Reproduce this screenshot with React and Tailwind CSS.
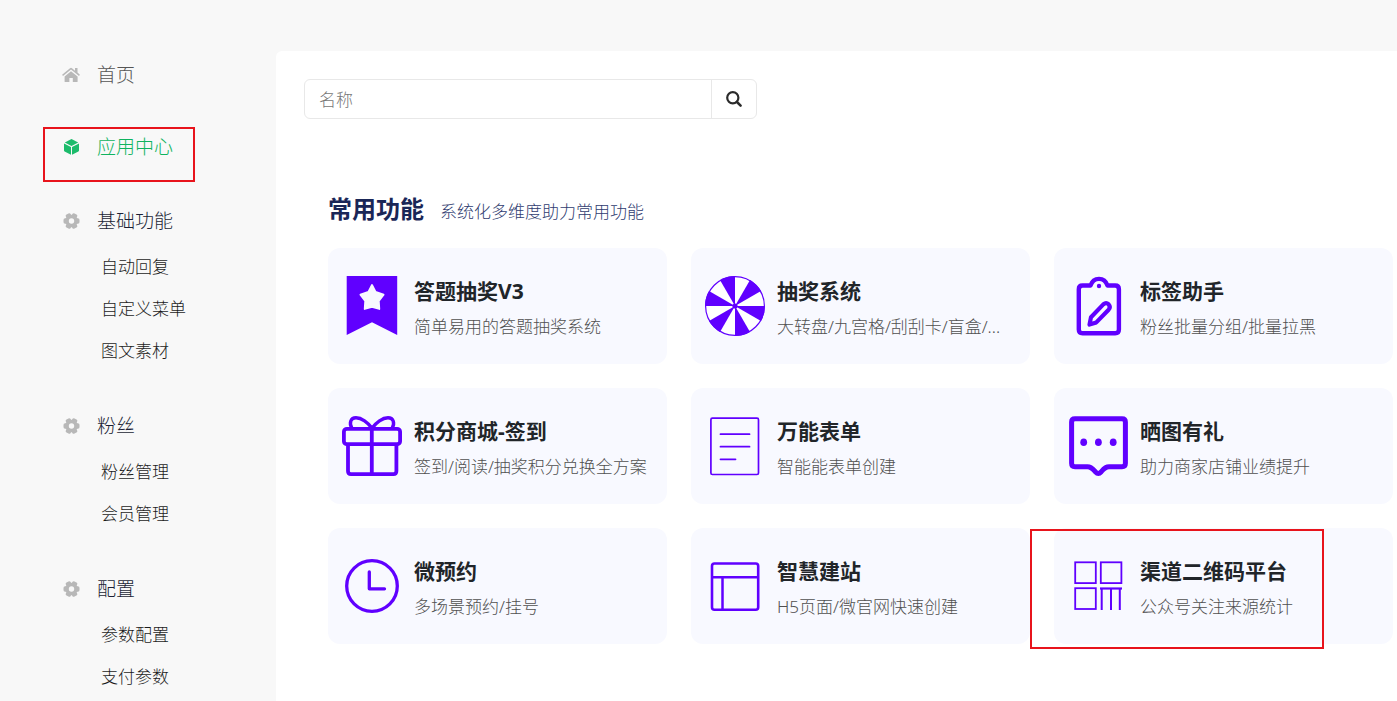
import React from 'react';

const PURPLE = '#6000ff';

function Svg({ children }) {
  return (
    <svg viewBox="0 0 60 60" className="size-[60px] shrink-0" fill="none" stroke={PURPLE} aria-hidden="true">
      {children}
    </svg>
  );
}

function BookmarkIcon() {
  return (
    <Svg>
      <path d="M4.7 0H55.2V59L30 46.3L4.7 59Z" fill={PURPLE} stroke="none" />
      <path
        d="M30 9L33.6 15.9L41.6 18.6L36.8 25L37.3 33L30 31L22.7 33L23.2 25L18.4 18.6L26.4 15.9Z"
        fill="#f8f9ff"
        stroke="#f8f9ff"
        strokeWidth="1.8"
        strokeLinejoin="round"
      />
    </Svg>
  );
}

function WheelIcon() {
  return (
    <Svg>
      <circle cx="30" cy="30" r="29.4" fill="#fff" strokeWidth="1.2" />
      {[0, 60, 120, 180, 240, 300].map((a) => (
        <path key={a} d="M30 30H60A30 30 0 0 1 55.98 45Z" fill={PURPLE} stroke="none" transform={`rotate(${a} 30 30)`} />
      ))}
      <circle cx="30" cy="30" r="2.6" fill={PURPLE} stroke="none" />
    </Svg>
  );
}

function ClipboardIcon() {
  return (
    <Svg>
      <path
        d="M22.5 9.5H14.5Q10.8 9.5 10.8 13.2V53.5Q10.8 57.2 14.5 57.2H47.2Q50.9 57.2 50.9 53.5V13.2Q50.9 9.5 47.2 9.5H39.5C38 5.2 35 2.9 31 2.9S24 5.2 22.5 9.5Z"
        strokeWidth="4.4"
        strokeLinejoin="round"
      />
      <circle cx="31" cy="10" r="2.2" fill={PURPLE} stroke="none" />
      <path d="M21.5 48.6L23 41.2L35.3 28.4Q38.1 25.9 40.6 28.3Q43 31 40.6 33.7L28.3 46.4Z" strokeWidth="4.2" strokeLinejoin="round" />
    </Svg>
  );
}

function GiftIcon() {
  return (
    <Svg>
      <g strokeWidth="3.8" strokeLinejoin="round">
        <rect x="1.9" y="12.8" width="56.2" height="15.4" rx="3" />
        <path d="M6 28.5V55Q6 58.1 9 58.1H51.4Q54.4 58.1 54.4 55V28.5M29.8 13V58" />
      </g>
      <path
        d="M29.8 12C26 6.5 19.5 1.7 14 1.7C8.5 1.7 7 7 9.8 12M30.2 12C34 6.5 40.5 1.7 46 1.7C51.5 1.7 53 7 50.2 12"
        strokeWidth="3.4"
      />
    </Svg>
  );
}

function FormIcon() {
  return (
    <Svg>
      <rect x="5.9" y="2.2" width="47.6" height="56.3" rx="1.5" strokeWidth="1.7" />
      <path d="M15.5 18.2H44.5M15.5 30.7H44.5M15.5 43.3H30.5" strokeWidth="1.8" strokeLinecap="round" />
    </Svg>
  );
}

function ChatIcon() {
  return (
    <Svg>
      <path
        d="M7 2.7H54Q57.4 2.7 57.4 6.1V47.3Q57.4 50.7 54 50.7H41C37 50.7 35.5 53 33 56Q30.3 58.9 27.6 56C25 53 23.5 50.7 19.5 50.7H7Q3.6 50.7 3.6 47.3V6.1Q3.6 2.7 7 2.7Z"
        strokeWidth="5"
      />
      <g fill={PURPLE} stroke="none">
        <ellipse cx="15.7" cy="26.3" rx="3.4" ry="3.8" />
        <ellipse cx="30.4" cy="26.3" rx="3.4" ry="3.8" />
        <ellipse cx="45.2" cy="26.3" rx="3.4" ry="3.8" />
      </g>
    </Svg>
  );
}

function ClockIcon() {
  return (
    <Svg>
      <circle cx="30" cy="30" r="25.3" strokeWidth="3.3" />
      <path d="M27.3 16V32.8H42.5" strokeWidth="3.3" strokeLinecap="round" strokeLinejoin="round" />
    </Svg>
  );
}

function LayoutIcon() {
  return (
    <Svg>
      <rect x="7" y="7.5" width="46.2" height="46.2" rx="2.5" strokeWidth="2.6" />
      <path d="M7 21.3H53M17.5 21.3V53.5" strokeWidth="2.5" />
    </Svg>
  );
}

function QrIcon() {
  return (
    <Svg>
      <g strokeWidth="1.8">
        <rect x="7.2" y="6.3" width="20.6" height="20.8" />
        <rect x="32.8" y="6.3" width="20.6" height="20.8" />
        <rect x="7.2" y="32.2" width="20.6" height="20.8" />
        <path d="M32 32.5H54" strokeWidth="2.2" />
        <path d="M33.7 32.5V54M43 32.5V54M51.8 32.5V54" strokeWidth="2" />
      </g>
    </Svg>
  );
}

function HomeIcon() {
  return (
    <svg viewBox="0 0 18 16" className="h-4 w-[18px]" fill="#b8b8b8" aria-hidden="true">
      <path d="M9 4.2L15.6 9.6V14.4Q15.6 15 15 15H10.8V10.9H7.4V15H3.2Q2.6 15 2.6 14.4V9.6Z" />
      <path d="M13 1H15.5V5.6L17.9 7.7L17 8.9L9 2.6L1 8.9L.1 7.7L8 1.2Q9 .5 10 1.2L13 3.7Z" />
    </svg>
  );
}

function CubeIcon() {
  return (
    <svg viewBox="0 0 18 16" className="h-4 w-[18px]" fill="#1cbb6b" aria-hidden="true">
      <path d="M9.5 0L16.2 3.5L9.5 6.9L2.8 3.5Z" />
      <path d="M2 4.5L9 8V15.8L2.6 12.5Q2 12.2 2 11.5Z" />
      <path d="M17 4.5L10 8V15.8L16.4 12.5Q17 12.2 17 11.5Z" />
    </svg>
  );
}

function GearIcon() {
  return (
    <svg viewBox="0 0 18 16" className="h-4 w-[18px]" aria-hidden="true">
      <g fill="#b8b8b8">
        <circle cx="9.5" cy="8" r="6.3" />
        {[0, 60, 120, 180, 240, 300].map((a) => (
          <rect key={a} x="12.5" y="5.3" width="5" height="5.4" rx="1.6" transform={`rotate(${a} 9.5 8)`} />
        ))}
      </g>
      <circle cx="9.5" cy="8" r="2.7" fill="#f8f8f8" />
    </svg>
  );
}

const groups = [
  { title: '基础功能', items: ['自动回复', '自定义菜单', '图文素材'] },
  { title: '粉丝', items: ['粉丝管理', '会员管理'] },
  { title: '配置', items: ['参数配置', '支付参数'] },
];

const apps = [
  { Icon: BookmarkIcon, title: '答题抽奖V3', text: '简单易用的答题抽奖系统' },
  { Icon: WheelIcon, title: '抽奖系统', text: '大转盘/九宫格/刮刮卡/盲盒/...' },
  { Icon: ClipboardIcon, title: '标签助手', text: '粉丝批量分组/批量拉黑' },
  { Icon: GiftIcon, title: '积分商城-签到', text: '签到/阅读/抽奖积分兑换全方案' },
  { Icon: FormIcon, title: '万能表单', text: '智能能表单创建' },
  { Icon: ChatIcon, title: '晒图有礼', text: '助力商家店铺业绩提升' },
  { Icon: ClockIcon, title: '微预约', text: '多场景预约/挂号' },
  { Icon: LayoutIcon, title: '智慧建站', text: 'H5页面/微官网快速创建' },
  { Icon: QrIcon, title: '渠道二维码平台', text: '公众号关注来源统计', marked: true },
];

function Sidebar() {
  return (
    <nav className="w-[276px] shrink-0 pl-[62px] pt-[50px]">
      <a href="#home" className="flex h-[50px] items-center gap-[17px] text-[19px] text-[#555]">
        <HomeIcon />
        首页
      </a>
      <div className="relative mb-6 mt-[22px]">
        <a href="#apps" aria-current="page" className="flex h-[50px] items-center gap-[17px] text-[19px] text-[#0fb35f]">
          <CubeIcon />
          应用中心
        </a>
        <span className="pointer-events-none absolute -left-[19px] top-[5px] h-[55px] w-[152px] border-2 border-[#e8141c]" />
      </div>
      <div className="flex flex-col gap-[29px]">
        {groups.map((g) => (
          <section key={g.title}>
            <h2 className="flex h-[50px] items-center gap-[17px] text-[19px] text-[#1b1f35]">
              <GearIcon />
              {g.title}
            </h2>
            <ul>
              {g.items.map((item) => (
                <li key={item}>
                  <a href="#item" className="flex h-[42px] items-center pl-[39px] text-[17px] text-[#1c1c1c]">
                    {item}
                  </a>
                </li>
              ))}
            </ul>
          </section>
        ))}
      </div>
    </nav>
  );
}

function AppCard({ Icon, title, text, marked }) {
  return (
    <a href="#app" className="relative flex h-[116px] items-center gap-3 rounded-xl bg-[#f8f9ff] px-[14px]">
      <Icon />
      <span className="flex min-w-0 flex-col gap-1 pt-[6px]">
        <span className="text-[21px] font-bold leading-8 text-[#212529]">{title}</span>
        <span className="whitespace-nowrap text-[17px] leading-8 text-[#505050]">{text}</span>
      </span>
      {marked && (
        <span className="pointer-events-none absolute -left-6 top-px h-[120px] w-[294px] border-2 border-[#e8141c]" />
      )}
    </a>
  );
}

export default function App() {
  return (
    <div className="flex min-h-screen bg-[#f8f8f8] font-light [font-family:'Noto_Sans','Noto_Sans_CJK_SC',sans-serif]">
      <Sidebar />
      <main className="mt-[51px] min-w-0 flex-1 rounded-tl-md bg-white pl-7 pt-7">
        <form className="flex h-10 w-[453px] rounded-md border border-[#e8e8e8]" onSubmit={(e) => e.preventDefault()}>
          <input
            type="text"
            aria-label="名称"
            placeholder="名称"
            className="min-w-0 flex-1 px-[14px] pt-[2px] text-[17px] font-light text-[#333] outline-none placeholder:text-[#777]"
          />
          <button type="submit" aria-label="搜索" className="flex w-[45px] items-center justify-center border-l border-[#e8e8e8]">
            <svg viewBox="0 0 16 16" className="size-4" fill="none" stroke="#2b2b2b" aria-hidden="true">
              <circle cx="6.8" cy="6.8" r="5.6" strokeWidth="2.2" />
              <path d="M11 11L14.6 14.6" strokeWidth="2.5" strokeLinecap="round" />
            </svg>
          </button>
        </form>
        <section className="pl-6 pr-1 pt-[71px]">
          <header className="flex h-[58px] items-start gap-4">
            <h1 className="text-[24px] font-bold leading-[38px] text-[#1a2657]">常用功能</h1>
            <p className="pt-1 text-[17px] leading-9 text-[#2f3c70]">系统化多维度助力常用功能</p>
          </header>
          <div className="grid grid-cols-3 gap-6">
            {apps.map((app) => (
              <AppCard key={app.title} {...app} />
            ))}
          </div>
        </section>
      </main>
    </div>
  );
}
